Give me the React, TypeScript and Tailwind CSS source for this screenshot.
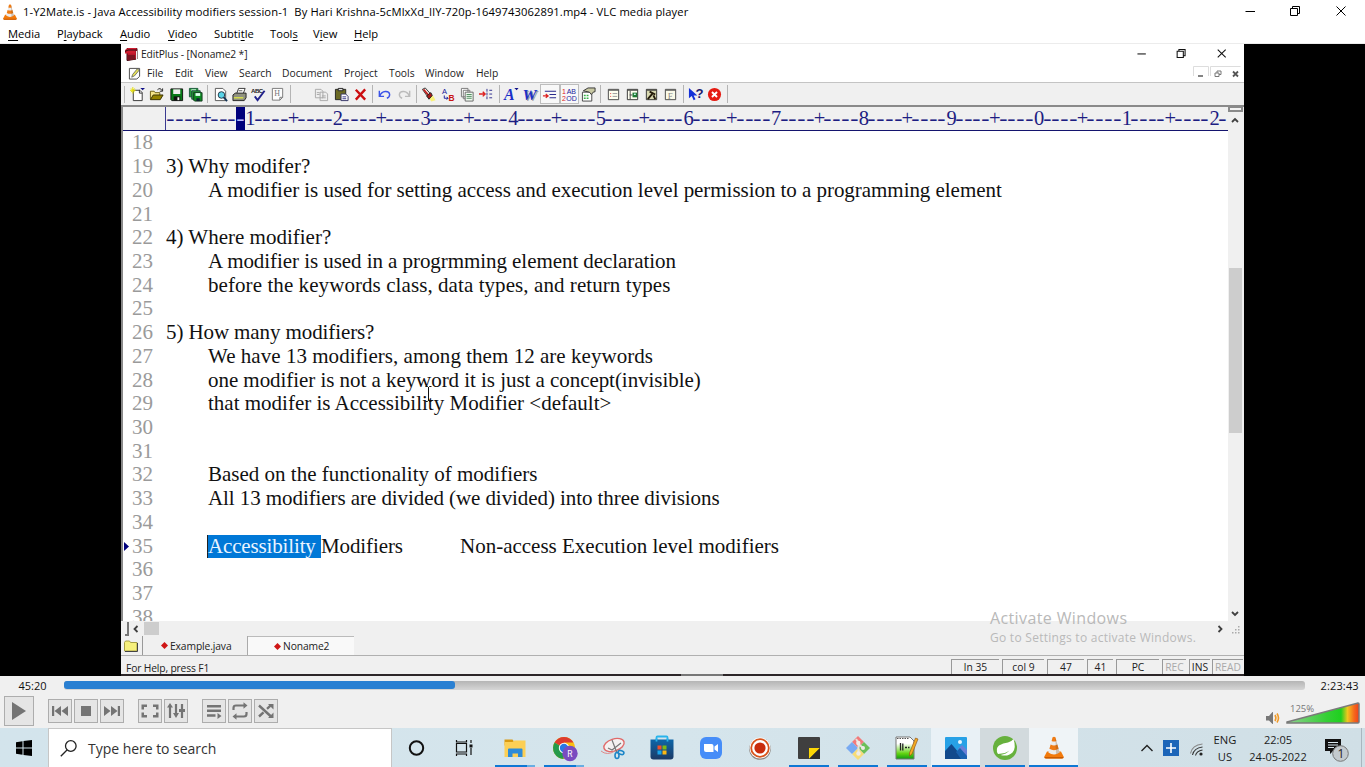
import React from "react";

const ui = "font-['Open_Sans','Noto_Sans',sans-serif]";

function Cone({ className }: { className: string }) {
  return (
    <svg viewBox="0 0 20 22" className={className}>
      <path d="M3 15 L17 15 L19.6 20 Q19.6 22 18 22 L2 22 Q0.4 22 0.4 20 Z" fill="#f27a0c" />
      <path d="M0.4 20.5 H19.6 V21 Q19.5 22 18 22 H2 Q0.5 22 0.4 21 Z" fill="#c95a00" />
      <path d="M8.6 0.8 Q10 -0.4 11.4 0.8 L15.6 16 Q10 20 4.4 16 Z" fill="#ececec" />
      <path d="M8.6 0.8 Q10 -0.4 11.4 0.8 L12.4 4.4 Q10 5.6 7.6 4.4 Z" fill="#ef7b14" />
      <path d="M6.6 8 Q10 9.8 13.4 8 L14.6 12.3 Q10 15 5.4 12.3 Z" fill="#ef7b14" />
      <path d="M11.4 0.8 L15.6 16 Q14 17.5 12 17.8 Z" fill="#7a4a20" opacity=".28" />
    </svg>
  );
}

const vlcMenu: [string, string, string, string][] = [
  ["", "M", "edia", "w-[49px]"],
  ["P", "l", "ayback", "w-[63px]"],
  ["", "A", "udio", "w-[48px]"],
  ["", "V", "ideo", "w-[46px]"],
  ["Subti", "t", "le", "w-[56px]"],
  ["Tool", "s", "", "w-[43px]"],
  ["V", "i", "ew", "w-[41px]"],
  ["", "H", "elp", "w-[40px]"],
];

const editMenu: [string, string][] = [
  ["File", "w-[28px]"],
  ["Edit", "w-[30px]"],
  ["View", "w-[34px]"],
  ["Search", "w-[43px]"],
  ["Document", "w-[62px]"],
  ["Project", "w-[45px]"],
  ["Tools", "w-[36px]"],
  ["Window", "w-[51px]"],
  ["Help", "w-[40px]"],
];

function WindowButtons({ big }: { big?: boolean }) {
  return (
    <svg viewBox="0 0 102 12" className={big ? "h-[12px] w-[102px]" : "h-[11px] w-[90px]"} fill="none" stroke={big ? "#000" : "#111"} strokeWidth={big ? 1 : 1.2}>
      <path d="M0.5 6.5h9.5" />
      <path d="M45.500 3.500h7v7h-7zM47.500 3.500v-2h7v7h-2" />
      <path d="M91.500 1.500l9 9M100.500 1.500l-9 9" />
    </svg>
  );
}

const glyphs: Record<string, React.ReactNode> = {
  blank: null,
  new: (
    <>
      <path d="M3.500 3.500h7l2.500 2.500v8.500H3.500z" fill="#fff" stroke="#333" />
      <path d="M10 3v3.500h3" fill="none" stroke="#333" />
      <path d="M3 0v7M0 3.500h6M1 1.500l4 4M5 1.500l-4 4" stroke="#e8e000" />
      <path d="M11 1h5l-2.500 2.500z" fill="#118" />
    </>
  ),
  open: (
    <>
      <path d="M1.500 13V4.500h4l1 1.500h5v3" fill="#f5e58a" stroke="#6a5c10" />
      <path d="M1.500 13.500l3-5h10.500l-3 5z" fill="#948300" stroke="#332d00" />
      <path d="M9 3q3-3 5 1M14.500 1.500v3h-3" fill="none" stroke="#222" />
    </>
  ),
  save: (
    <>
      <path d="M2 2h12.500v12.500H3L2 13.500z" fill="#087a18" stroke="#111" />
      <path d="M4.500 2.500h7.500v5H4.500z" fill="#eee" />
      <path d="M5 10h7v4.500H5z" fill="#111" />
      <path d="M9 11h2v3H9z" fill="#fff" />
    </>
  ),
  saveall: (
    <>
      <path d="M1.500 1.500h9v9h-9z" fill="#279a3a" stroke="#1d5a3c" />
      <path d="M3.500 2.500h5v2h-5z" fill="#dfe" />
      <path d="M4 4h9v9H4z" fill="#279a3a" stroke="#1d4a3c" />
      <path d="M6 6h9v9H7l-1-1z" fill="#0c8a20" stroke="#153a20" />
      <path d="M8 6.500h5v3H8z" fill="#dfe" />
      <path d="M9 12h3.500v3H9z" fill="#123" />
    </>
  ),
  preview: (
    <>
      <path d="M2.500 1.500h8l3 3v10h-11z" fill="#fff" stroke="#555" />
      <circle cx="9" cy="8.500" r="3.500" fill="#59d4e8" stroke="#234" />
      <path d="M11.500 11l3.500 4" stroke="#135" strokeWidth="2" />
    </>
  ),
  print: (
    <>
      <path d="M5 7l2-5.500h7L12 7z" fill="#fff" stroke="#333" />
      <path d="M1 8.500L3.500 6.500H15v5l-2 3H1z" fill="#8f9180" stroke="#222" />
      <path d="M2 11.500h10" stroke="#d9e34a" strokeWidth="1.500" />
      <path d="M7 4h4" stroke="#555" />
    </>
  ),
  spell: (
    <>
      <text x="0" y="6" fontSize="6.500" fontWeight="700" fill="#222" fontFamily="Liberation Sans" textLength="13">ABC</text>
      <path d="M4 10l3 4L14.500 4" fill="none" stroke="#22228c" strokeWidth="2" />
    </>
  ),
  hdoc: (
    <>
      <path d="M2.500 1.500h11v9.500l-3 3h-8z" fill="#fdfdfd" stroke="#777" />
      <path d="M10.500 14v-3h3" fill="none" stroke="#777" />
      <text x="4.500" y="10" fontSize="8.500" fill="#777" fontFamily="Liberation Serif">H</text>
    </>
  ),
  copygray: (
    <path d="M1.500 2.500h6l2 2v7h-8zM6.500 5.500h6l2 2v7h-8zM3 6h3M3 8h3M8.500 9.500h4M8.500 11.500h4" fill="#eee" stroke="#a9a9a9" />
  ),
  paste: (
    <>
      <path d="M1.500 2.500h11v11h-11z" fill="#6b6a24" stroke="#222" />
      <path d="M4.500 1.500h5v2.500h-5z" fill="#ddd" stroke="#222" />
      <path d="M7.500 7.500h5l2.500 2.500v4.500H7.500z" fill="#fff" stroke="#336" />
      <path d="M9 10.500h4M9 12.500h4" stroke="#338" />
    </>
  ),
  del: <path d="M3 3l10 10.500M13 2.500L3 13.500" stroke="#cc0d10" strokeWidth="2.500" />,
  undo: <path d="M2.500 4v6h5M3 9.500C5 3.500 13 3.500 13.500 8q0 3-3 4" fill="none" stroke="#3b53e8" strokeWidth="1.500" />,
  redo: <path d="M13.500 4v6h-5M13 9.500C11 3.500 3 3.500 2.500 8q0 3 3 4" fill="none" stroke="#bbb" strokeWidth="1.500" />,
  find: (
    <>
      <path d="M11 9l2.500 1 2 4-4.500 1.500-2-3z" fill="#f9f27a" />
      <path d="M1.500 2.500L4.500 1l5 5.500-3 3z" fill="#f3e4e0" stroke="#333" />
      <path d="M2 3l1.500-1 5 6-1.500 1z" fill="#c01c1c" />
      <path d="M6 9.500L10.500 6l1.500 3-3.500 4z" fill="#a81818" stroke="#222" />
    </>
  ),
  replace: (
    <>
      <text x="1" y="7.500" fontSize="8" fill="#15159a" fontFamily="Liberation Sans">A</text>
      <text x="8" y="14.500" fontSize="9" fill="#c81414" fontFamily="Liberation Sans" fontWeight="700">B</text>
      <path d="M3.500 9v3h4M6 10.500l1.500 1.500L6 13.500" fill="none" stroke="#15159a" />
    </>
  ),
  copies: (
    <>
      <path d="M1.500 1.500h7v9h-7zM3.500 3.500h7v9h-7z" fill="#fff" stroke="#777" />
      <path d="M5.500 5.500h8.500v9.500H5.500z" fill="#eef8ee" stroke="#666" />
      <path d="M7 8h5.500M7 10h5.500M7 12h5.500" stroke="#4a8a5a" />
    </>
  ),
  goto: (
    <>
      <path d="M0 7.500h6M4 5l2.500 2.500L4 10" fill="none" stroke="#d22" strokeWidth="1.500" />
      <path d="M8.500 2v12M11 3.500h4M11 7.500h4M11 11.500h4" stroke="#2a2a8c" strokeDasharray="3 1" />
    </>
  ),
  fontA: (
    <>
      <text x="0" y="14" fontSize="17" fontStyle="italic" fontWeight="700" fill="#1b30c8" fontFamily="Liberation Serif">A</text>
      <path d="M11 1h4.500l-2 2.500z" fill="#118" />
    </>
  ),
  fontW: (
    <>
      <text x="0.800" y="14.800" fontSize="16" fontStyle="italic" fontWeight="700" fill="#9a9aa8" fontFamily="Liberation Serif" textLength="15" lengthAdjust="spacingAndGlyphs">W</text>
      <text x="-0.500" y="13.800" fontSize="16" fontStyle="italic" fontWeight="700" fill="#1b30c8" fontFamily="Liberation Serif" textLength="15" lengthAdjust="spacingAndGlyphs">W</text>
    </>
  ),
  indent: (
    <>
      <path d="M1 9.500h5M4 7.500l2.500 2L4 11.500" fill="none" stroke="#d22" strokeWidth="1.300" />
      <path d="M3 4.500h12M8 8h7M8 11.500h7" stroke="#2a2a8c" strokeWidth="1.200" />
    </>
  ),
  nums: (
    <>
      <text x="0" y="7.500" fontSize="7.500" fill="#d22" fontFamily="Liberation Sans">1</text>
      <text x="0" y="15" fontSize="7.500" fill="#d22" fontFamily="Liberation Sans">2</text>
      <text x="5" y="7.500" fontSize="7.500" fill="#22229c" fontFamily="Liberation Sans">AB</text>
      <text x="4.500" y="15" fontSize="7.500" fill="#22229c" fontFamily="Liberation Sans">OD</text>
    </>
  ),
  props: (
    <>
      <path d="M1.500 5.500h10v9.500h-10z" fill="#fff" stroke="#444" />
      <path d="M3 9h6M3 12h6" stroke="#39b34a" strokeWidth="1.500" strokeDasharray="2 1" />
      <path d="M2.500 4l5-3h7.500v4l-2 .5L11 8 9 5.500z" fill="#c9c9a4" stroke="#333" />
    </>
  ),
  win1: (
    <>
      <path d="M2.500 2.500h11v11h-11z" fill="#fffff0" stroke="#444" />
      <path d="M2.500 3.500h11" stroke="#555" />
      <path d="M4.500 7h1M4.500 10h1" stroke="#d33" />
      <path d="M7 7h5M7 10h5" stroke="#999" />
    </>
  ),
  win2: (
    <>
      <path d="M2.500 2.500h11v11h-11z" fill="#fffff0" stroke="#333" />
      <path d="M2.500 3.500h11M5.500 4v9M5 8.500h3" stroke="#444" />
      <path d="M8 6h5v5H8z" fill="#1f7a34" />
      <path d="M9.500 7h2v1.500h-2z" fill="#cfe" />
    </>
  ),
  win3: (
    <>
      <path d="M2.500 2.500h11v11h-11z" fill="#d8d8b0" stroke="#333" />
      <path d="M2.500 3.500h11" stroke="#444" />
      <path d="M4 13l5-6M6 5l6 3M10 9l2 4" stroke="#231a0a" strokeWidth="2" />
    </>
  ),
  win4: (
    <>
      <path d="M2.500 2.500h11v11h-11z" fill="#fafae8" stroke="#444" />
      <path d="M2.500 3.500h11" stroke="#555" />
      <text x="5" y="12.500" fontSize="9.500" fill="#888" fontFamily="Liberation Serif">F</text>
    </>
  ),
  help: (
    <>
      <path d="M1 1v11l3-2.500 2 4.500 2-1-2-4h4z" fill="#1430d8" />
      <text x="8" y="12" fontSize="14" fontWeight="700" fill="#1b1b70" fontFamily="Liberation Sans">?</text>
    </>
  ),
  stop: (
    <>
      <circle cx="8" cy="8" r="7" fill="#e51b12" />
      <path d="M5.300 5.300l5.400 5.400M10.700 5.300l-5.400 5.400" stroke="#fff" strokeWidth="2" />
    </>
  ),
};

const toolGroups = [
  ["new", "open", "save", "saveall"],
  ["preview", "print", "spell", "hdoc"],
  ["blank", "copygray", "paste", "del"],
  ["undo", "redo"],
  ["find", "replace", "copies", "goto"],
  ["fontA", "fontW", "indent", "nums", "props"],
  ["win1", "win2", "win3", "win4"],
  ["help", "stop"],
];

function Toolbar() {
  return (
    <div className="flex h-[23px] items-center border-t border-[#c4c4c4] bg-[#f0f0f0] pl-[3px]">
      <div className="mr-[3px] h-[17px] w-px bg-[#b8b8b8]" />
      {toolGroups.map((g, i) => (
        <React.Fragment key={i}>
          {g.map((n) => (
            <div key={n} className={n === "indent" || n === "nums" ? "flex h-[20px] w-[19.28px] items-center justify-center border border-[#bdbdbd] bg-[#f8f8f8]" : "flex h-[20px] w-[19.28px] items-center justify-center"}>
              <svg viewBox="0 0 16 16" className="h-[15px] w-[15px] shrink-0 overflow-visible">{glyphs[n]}</svg>
            </div>
          ))}
          <div className="flex w-[5.4px] justify-center">
            <div className="h-[18px] w-px bg-[#b4b4b4]" />
          </div>
        </React.Fragment>
      ))}
    </div>
  );
}

const rulerChars = Array.from({ length: 121 }, (_, i) => (i % 10 === 9 ? String(((i + 1) / 10) % 10) : i % 10 === 4 ? "+" : "-"));

type Line = { n: number; t?: string; cls?: string };
const lines: Line[] = [
  { n: 18 },
  { n: 19, t: "3) Why modifer?", cls: "" },
  { n: 20, t: "A modifier is used for setting access and execution level permission to a programming element", cls: "pl-[42px] tracking-[-0.044px]" },
  { n: 21 },
  { n: 22, t: "4) Where modifier?", cls: "" },
  { n: 23, t: "A modifier is used in a progrmming element declaration", cls: "pl-[42px] tracking-[-0.06px]" },
  { n: 24, t: "before the keywords class, data types, and return types", cls: "pl-[42px] tracking-[0.075px]" },
  { n: 25 },
  { n: 26, t: "5) How many modifiers?", cls: "tracking-[-0.1px]" },
  { n: 27, t: "We have 13 modifiers, among them 12 are keywords", cls: "pl-[42px] tracking-[0.035px]" },
  { n: 28, t: "one modifier is not a keyword it is just a concept(invisible)", cls: "pl-[42px] tracking-[-0.05px]" },
  { n: 29, t: "that modifer is Accessibility Modifier <default>", cls: "pl-[42px]" },
  { n: 30 },
  { n: 31 },
  { n: 32, t: "Based on the functionality of modifiers", cls: "pl-[42px]" },
  { n: 33, t: "All 13 modifiers are divided (we divided) into three divisions", cls: "pl-[42px] tracking-[-0.075px]" },
  { n: 34 },
  { n: 35 },
  { n: 36 },
  { n: 37 },
  { n: 38 },
];

function Editor() {
  return (
    <div className="relative h-[490px] overflow-hidden bg-white pt-[0.4px] font-['Liberation_Serif',serif] text-[21px] leading-[23.72px] text-[#111]">
      {lines.map((l) => (
        <div key={l.n} className="flex h-[23.72px] whitespace-pre">
          <span className="flex w-[9px] items-center justify-start pl-px">
            {l.n === 35 && (
              <svg viewBox="0 0 5 9" className="h-[9px] w-[5px]">
                <path d="M0 0l5 4.500L0 9z" fill="#00007c" />
              </svg>
            )}
          </span>
          <span className="w-[34px] text-[#9a9a9a]">{l.n}</span>
          {l.n === 35 ? (
            <>
              <span className="ml-[41px] w-[114px] border-l border-[#222] bg-[#0078d7] tracking-[-0.15px] text-[#eaf4ff]">Accessibility </span>
              <span className="w-[139px] tracking-[-0.1px]">Modifiers</span>
              <span>Non-access Execution level modifiers</span>
            </>
          ) : (
            <span className={l.cls}>{l.t}</span>
          )}
        </div>
      ))}
      <svg viewBox="0 0 7 16" className="absolute left-[302px] top-[255px] h-[16px] w-[7px]" fill="none" stroke="#111">
        <path d="M0.500 0.500h2l1 1 1-1h2M3.500 1v14M0.500 15.500h2l1-1 1 1h2" />
      </svg>
    </div>
  );
}

function Chevron({ d, className }: { d: string; className: string }) {
  return (
    <svg viewBox="0 0 8 8" className={className} fill="none" stroke="#404040" strokeWidth="1.800">
      <path d={d} />
    </svg>
  );
}

function EditPlus() {
  return (
    <div className={`relative flex h-[632px] w-[1123px] flex-col bg-[#f0f0f0] text-[#222] ${ui}`}>
      <div className="flex h-[20px] items-center bg-white pl-[3px]">
        <svg viewBox="0 0 14 14" className="h-[14px] w-[14px]">
          <path d="M3 1.500h10v10.500L3 13.500z" fill="#b9152a" stroke="#3a0b12" />
          <path d="M1 3l3-2h9l-2 2.500v3H1z" fill="#cf1c30" />
          <path d="M1 4.500l3-1.500h8" fill="none" stroke="#2b0a10" />
          <path d="M4 8h7v4.500l-7 1z" fill="#7b1220" />
          <path d="M12.500 4v9" stroke="#eee" />
        </svg>
        <span className="ml-[3px] flex-1 text-[10.300px] leading-[20px] tracking-[-0.13px]">EditPlus - [Noname2 *]</span>
        <div className="mb-[2px] mr-[17px] flex"><WindowButtons /></div>
      </div>
      <div className="flex h-[18px] items-center bg-white pl-[7px] text-[10.300px]">
        <svg viewBox="0 0 14 14" className="mr-[6px] h-[13px] w-[13px]">
          <path d="M1.500 1.500h11v8.500l-3 3h-8z" fill="#fff" stroke="#444" />
          <path d="M4 11l1-3 5-6 2 1.500-5 6z" fill="#e6e25a" stroke="#555" strokeWidth=".8" />
        </svg>
        {editMenu.map(([t, w]) => (
          <span key={t} className={`${w} whitespace-nowrap leading-[17px]`}>{t}</span>
        ))}
        <div className="mb-[4px] ml-auto mr-[3px] flex h-[13px]">
          <svg viewBox="0 0 48 13" className="h-[13px] w-[48px]" fill="none" stroke="#777">
            <path d="M0.500 11V1.500h15V11M17.500 11V1.500h30" stroke="#ddd" />
            <path d="M5 11h5" strokeWidth="1.800" />
            <path d="M22 8h4v3.500h-4zM24 8V6h4v3.500h-2" />
            <path d="M40 6.500l5 5M45 6.500l-5 5" strokeWidth="1.800" stroke="#555" />
          </svg>
        </div>
      </div>
      <Toolbar />
      <div className="flex h-[516px] border-l-2 border-t-2 border-[#8a8a8a]">
        <div className="flex w-[1105px] flex-col">
          <div className="flex h-[24px] border-b border-[#14146e] bg-[#f0f0f0] pl-[42px] font-['Liberation_Serif',serif] text-[20.500px] leading-[22px] text-[#1d1d82]">
            <div className="flex border-l border-[#3a3a90]">
              {rulerChars.map((c, i) => (
                <span key={i} className={i === 8 ? "flex w-[8.780px] justify-center bg-[#00007c] text-[#b8b8ff]" : "flex w-[8.780px] justify-center"}>
                  <span className={c === "-" ? "inline-block scale-x-120" : c === "+" ? "pl-px" : "relative left-px"}>{c}</span>
                </span>
              ))}
            </div>
          </div>
          <Editor />
        </div>
        <div className="flex w-[14px] flex-col items-center bg-[#f0f0f0]">
          <div className="mt-[-1px] h-[6px] w-[15px] border-2 border-[#8a8a8a] bg-[#f4f4f4]" />
          <Chevron d="M1 6l3-3 3 3" className="mt-[4px] h-[8px] w-[8px]" />
          <div className="mt-[144px] h-[165px] w-[13px] bg-[#cdcdcd]" />
          <Chevron d="M1 2l3 3 3-3" className="mt-[177px] h-[8px] w-[8px]" />
        </div>
      </div>
      <div className="flex h-[15px] items-center bg-[#f0f0f0] pl-[4px]">
        <div className="h-[14px] w-[4px] border-b-2 border-r-2 border-[#777]" />
        <Chevron d="M5.500 1l-3 3 3 3" className="ml-[3px] h-[8px] w-[8px]" />
        <div className="ml-[4px] h-[13px] w-[15px] bg-[#cdcdcd]" />
        <Chevron d="M2.500 1l3 3-3 3" className="ml-auto mr-[7px] h-[8px] w-[8px]" />
        <svg viewBox="0 0 10 10" className="mr-[3px] mt-[3px] h-[10px] w-[10px]" fill="#aaa">
          <path d="M7 1h1.500v1.500H7zM7 4h1.500v1.500H7zM4 4h1.500v1.500H4zM7 7h1.500v1.500H7zM4 7h1.500v1.500H4zM1 7h1.500v1.500H1z" />
        </svg>
      </div>
      <div className="flex h-[20px] border-b border-[#b0b0b0] text-[10.300px] leading-[21px] tracking-[-0.12px]">
        <div className="flex w-[22px] items-center justify-center border-r border-[#999] pr-px">
          <svg viewBox="0 0 14 12" className="h-[12px] w-[14px]">
            <path d="M0.500 2.500l1-1.500h4l1 1.500h6.500v8.500H0.500z" fill="#f6f07c" stroke="#a8a044" />
            <path d="M1 11.500h12.500V3" fill="none" stroke="#444" />
          </svg>
        </div>
        <div className="flex w-[105px] items-center border-r border-[#aaa] pl-[18px]">
          <svg viewBox="0 0 8 8" className="mr-[2px] h-[7px] w-[7px]"><path d="M4 0l4 4-4 4-4-4z" fill="#cf1616" /></svg>
          <span className="mt-px">Example.java</span>
        </div>
        <div className="flex w-[106px] items-center border-t border-[#bbb] bg-[#f9f9f9] pl-[26px]">
          <svg viewBox="0 0 8 8" className="mr-[2px] h-[7px] w-[7px]"><path d="M4 0l4 4-4 4-4-4z" fill="#cf1616" /></svg>
          <span className="mt-px">Noname2</span>
        </div>
      </div>
      <div className="flex h-[18px] items-end pl-[5px] pr-px text-[10.300px] leading-[14px]">
        <span className="mb-[-1px] flex-1 tracking-[-0.16px]">For Help, press F1</span>
        <span className="flex h-[15px] w-[48px] items-center justify-center border-l border-t border-[#999]">ln 35</span>
        <span className="ml-[3px] flex h-[15px] w-[42px] items-center justify-center border-l border-t border-[#999]">col 9</span>
        <span className="ml-[3px] flex h-[15px] w-[37px] items-center justify-center border-l border-t border-[#999]">47</span>
        <span className="ml-[3px] flex h-[15px] w-[26px] items-center justify-center border-l border-t border-[#999]">41</span>
        <span className="ml-[3px] flex h-[15px] w-[43px] items-center justify-center border-l border-t border-[#999]">PC</span>
        <span className="ml-[3px] flex h-[15px] w-[24px] items-center justify-center border-l border-t border-[#999] text-[#aaa]">REC</span>
        <span className="ml-[3px] flex h-[15px] w-[21px] items-center justify-center border-l border-t border-[#999]">INS</span>
        <span className="ml-[2px] flex h-[15px] w-[31px] items-center justify-center border-l border-t border-[#999] text-[#aaa]">READ</span>
      </div>
      <div className="flex h-[2px] bg-[#2c2628]">
        <div className="ml-[560px] h-[2px] w-[42px] bg-[#777]" />
      </div>
      <div className="absolute left-[869px] top-[564px] text-[#b9b9b9]">
        <div className="whitespace-nowrap text-[16px] leading-[21px] tracking-[0.38px]">Activate Windows</div>
        <div className="whitespace-nowrap text-[12px] leading-[18px] tracking-[0.27px]">Go to Settings to activate Windows.</div>
      </div>
    </div>
  );
}

function Btn({ children }: { children: React.ReactNode }) {
  return (
    <div className="flex h-[24px] w-[24px] items-center justify-center border border-[#adadad] bg-[#e5e5e5]">
      <svg viewBox="0 0 20 20" className="h-[20px] w-[20px]" fill="#747474">{children}</svg>
    </div>
  );
}

function Controls() {
  return (
    <div className={`flex h-[52px] flex-col bg-[#f0f0f0] ${ui}`}>
      <div className="flex h-[19px] items-center text-[11px] leading-[19px] text-[#111]">
        <span className="w-[64px] pl-[18.500px]">45:20</span>
        <div className="h-[9px] w-[1241px] rounded-[3px] bg-linear-to-b from-[#b5b5b5] to-[#d6d6d6]">
          <div className="h-[8px] w-[391px] rounded-[3px] bg-[#2a80d2]" />
        </div>
        <span className="ml-[15.500px] tracking-[0.15px]">2:23:43</span>
      </div>
      <div className="flex h-[33px] pl-[4px]">
        <div className="mt-[1px] flex h-[30px] w-[30px] items-center justify-center border border-[#adadad] bg-[#e5e5e5]">
          <svg viewBox="0 0 14 18" className="h-[18px] w-[14px]"><path d="M0 0l14 9L0 18z" fill="#747474" /></svg>
        </div>
        <div className="ml-[14px] mt-[4px] flex gap-[2px]">
          <Btn><path d="M2 5h2.200v10H2zM11 5v10l-6.500-5zM18 5v10l-6.500-5z" /></Btn>
          <Btn><path d="M5 5h10v10H5z" /></Btn>
          <Btn><path d="M18 5h-2.200v10H18zM9 5v10l6.500-5zM2 5v10l6.500-5z" /></Btn>
        </div>
        <div className="ml-[14px] mt-[4px] flex gap-[2px]">
          <Btn><path d="M1.500 3.500h5.500v2.500H4v2.500H1.500zM18.500 3.500H13v2.500h3v2.500h2.500zM1.500 16.500h5.500V14H4v-2.500H1.500zM18.500 16.500H13V14h3v-2.500h2.500z" /></Btn>
          <Btn>
            <path d="M2.900 6h2.200v11H2.900zM4 2l3 4.500H1zM8.900 3h2.200v10H8.900zM7 12h6l-3 5zM14.900 3h2.200v14h-2.200zM13 8h6v3h-6z" />
          </Btn>
        </div>
        <div className="ml-[14px] mt-[4px] flex gap-[2px]">
          <Btn><path d="M3 4h14v2.400H3zM3 8.600h14V11H3zM3 13.300h8.500v2.400H3zM13.500 12l4 3-4 3z" /></Btn>
          <Btn>
            <path d="M3.500 9V7q0-2.500 2.500-2.500h8M16.500 11v2q0 2.500-2.500 2.500H6" fill="none" stroke="#747474" strokeWidth="2.200" />
            <path d="M13.500 1.200l4 3.300-4 3.300zM6.500 12.200l-4 3.300 4 3.300z" />
          </Btn>
          <Btn>
            <path d="M3 4.500L15 15.500M3 15.500l4.500-4.200M11 7.800l4-3.600" fill="none" stroke="#747474" strokeWidth="2.400" />
            <path d="M12 3h5.500v5.500zM12 17h5.500v-5.500z" />
          </Btn>
        </div>
        <svg viewBox="0 0 96 28" className="ml-auto mr-[4px] mt-[4px] h-[28px] w-[96px]">
          <defs>
            <linearGradient id="vol" x1="0" x2="1">
              <stop offset="0" stopColor="#8fd08f" />
              <stop offset=".55" stopColor="#35cf35" />
              <stop offset=".75" stopColor="#1fd01f" />
              <stop offset=".84" stopColor="#f0c61e" />
              <stop offset=".93" stopColor="#f56a1c" />
              <stop offset="1" stopColor="#ee3f1c" />
            </linearGradient>
          </defs>
          <path d="M1 17h3l3.500-4h.5v12h-.5L4 21.500H1z" fill="#777" />
          <path d="M10 16q1.800 3 0 6M12 14.500q3 4.500 0 9" fill="none" stroke="#f09a28" strokeWidth="1.600" />
          <path d="M22 23L93 4q1 0 1 1v18q0 1-1 1H22z" fill="url(#vol)" stroke="#7a7a7a" strokeWidth="1.500" />
          <text x="25" y="12.500" fontSize="9.500" fill="#777" fontFamily="Open Sans" textLength="24">125%</text>
        </svg>
      </div>
    </div>
  );
}

const apps: { id: string; cell: string; bar: string; light?: boolean; art: React.ReactNode }[] = [
  { id: "cortana", cell: "", bar: "", art: <circle cx="11.500" cy="12" r="6.700" fill="none" stroke="#111" strokeWidth="2" /> },
  {
    id: "taskview", cell: "", bar: "",
    art: (
      <g fill="none" stroke="#111" strokeWidth="1.200">
        <path d="M2.500 7.500h10v8.500h-10zM2.500 4v2h10V4M2.500 20v-2h10v2M17 4v3M17 12v7" />
        <path d="M15.500 8.500h3v3h-3z" fill="#111" stroke="none" />
      </g>
    ),
  },
  {
    id: "explorer", cell: "", bar: "w-[40px]", light: true,
    art: (
      <>
        <path d="M1.500 3.500h8l1.500 2v4h-9.500z" fill="#d99a12" />
        <path d="M1.500 6h8l2-1.500h11V21h-21z" fill="#fccf55" />
        <path d="M5 13.500q0-1 1-1h12.500q1 0 1 1V21H15v-3.500H9.500V21H5z" fill="#2d8bd8" />
      </>
    ),
  },
  {
    id: "chrome", cell: "", bar: "w-[40px]", light: true,
    art: (
      <>
        <circle cx="12" cy="12" r="11" fill="#fbbf12" />
        <path d="M12 12L2.500 6.500A11 11 0 0 1 21.500 6.500H12z" fill="#dd3b2e" />
        <path d="M12 12L2.500 6.500A11 11 0 0 0 11.500 23z" fill="#249a4b" />
        <circle cx="12" cy="12" r="5.200" fill="#fff" />
        <circle cx="12" cy="12" r="4.200" fill="#2a78e4" />
        <circle cx="18" cy="17.500" r="7.700" fill="#7a4cc0" />
        <text x="15.200" y="20.800" fontSize="8.500" fill="#fff" fontFamily="Roboto">R</text>
      </>
    ),
  },
  {
    id: "snip", cell: "", bar: "",
    art: (
      <g fill="none">
        <ellipse cx="13" cy="9" rx="10.500" ry="6" transform="rotate(-18 13 9)" fill="#f4f1f1" stroke="#e06a6a" strokeWidth="1.400" />
        <path d="M0 15q6 5 14 0" stroke="#e08a8a" />
        <path d="M11 4l5 13M20 7l-9 7-4-2" stroke="#777" strokeWidth="1.200" />
        <ellipse cx="16" cy="19.500" rx="2" ry="3" stroke="#1d86c8" strokeWidth="1.600" />
        <ellipse cx="20" cy="16.500" rx="3" ry="1.900" transform="rotate(20 20 16.500)" stroke="#1d86c8" strokeWidth="1.600" />
      </g>
    ),
  },
  {
    id: "store", cell: "", bar: "",
    art: (
      <>
        <defs><linearGradient id="st" x1="0" y1="0" x2="0" y2="1"><stop offset="0" stopColor="#0d66a8" /><stop offset="1" stopColor="#1c3a66" /></linearGradient></defs>
        <path d="M6.500 4.500V1.500q0-1 1-1h9q1 0 1 1v3" fill="none" stroke="#28b4ec" strokeWidth="1.800" />
        <path d="M0.500 3.500h23V20.500q0 3-3 3H3.500q-3 0-3-3z" fill="url(#st)" />
        <path d="M6.500 5.500V2.500M17.500 5.500V2.500" stroke="#28b4ec" strokeWidth="1.800" />
        <path d="M7.500 9.500h4v4h-4z" fill="#f0502a" /><path d="M12.500 9.500h4v4h-4z" fill="#7cba12" />
        <path d="M7.500 14.500h4v4h-4z" fill="#18a4ea" /><path d="M12.500 14.500h4v4h-4z" fill="#fcb813" />
      </>
    ),
  },
  {
    id: "zoom", cell: "", bar: "",
    art: (
      <>
        <rect x="1" y="1" width="22" height="22" rx="6" fill="#468df8" />
        <path d="M5 8h7.500q2 0 2 2v6H7q-2 0-2-2zM15.500 10.500L19 8v8l-3.500-2.500z" fill="#fff" />
      </>
    ),
  },
  {
    id: "record", cell: "", bar: "",
    art: (
      <>
        <circle cx="12" cy="13" r="10.800" fill="#8d8580" />
        <circle cx="12" cy="12" r="10.500" fill="#fff" />
        <circle cx="12" cy="12" r="8.800" fill="#fff" stroke="#d8541c" strokeWidth="1.800" />
        <circle cx="12" cy="12" r="5.600" fill="#c92c0c" />
      </>
    ),
  },
  {
    id: "sticky", cell: "", bar: "w-[40px]",
    art: (
      <>
        <rect x="1" y="1" width="22" height="22" rx="1" fill="#3f3f3f" />
        <path d="M12 12h11L12 23z" fill="#fcd705" /><path d="M23 12v11H12z" fill="#2d2d2d" />
      </>
    ),
  },
  {
    id: "git", cell: "", bar: "w-[40px]",
    art: (
      <>
        <path d="M12 0l6 6-6 6-6-6z" fill="#f27a7a" /><path d="M18 6l6 6-6 6-6-6z" fill="#6cbf58" />
        <path d="M12 12l6 6-6 6-6-6z" fill="#f7dc78" /><path d="M6 6l6 6-6 6-6-6z" fill="#78aaf2" />
        <path d="M10 3l2.500 3.500v11M12.500 8l4.500 4" fill="none" stroke="#e6e2dc" strokeWidth="2" />
        <circle cx="12.500" cy="17.500" r="2.200" fill="#efebe6" /><circle cx="17" cy="12" r="2" fill="#efebe6" /><circle cx="12.300" cy="7" r="2.200" fill="#efebe6" />
      </>
    ),
  },
  {
    id: "notepad", cell: "", bar: "w-[40px]",
    art: (
      <>
        <defs><linearGradient id="np" x1="0" y1="0" x2="0" y2="1"><stop offset=".3" stopColor="#fff" /><stop offset=".75" stopColor="#62d312" /><stop offset="1" stopColor="#0d9a10" /></linearGradient></defs>
        <path d="M1 1h14l4 4v18H1z" fill="url(#np)" stroke="#777" />
        <path d="M2 2.500h12" stroke="#555" strokeDasharray="1.500 1" />
        <path d="M5.500 7v7.500M7.800 7.500v7M10 11.500h2M13 11.500h1.500" stroke="#222" strokeWidth="1.300" />
        <path d="M14.500 17l6-15 2.500 1-6 15-2.500 2z" fill="#f2aa22" stroke="#8a4a12" strokeWidth=".6" />
      </>
    ),
  },
  {
    id: "photos", cell: "bg-[#e9f1f6]", bar: "w-[48px]",
    art: (
      <>
        <rect x="1" y="1" width="22" height="22" rx="1" fill="#27a1e6" />
        <path d="M14 13l4-4 5 5v8h-9z" fill="#6a80d8" />
        <path d="M1 15l6.500-7L20 23H1z" fill="#12498c" /><path d="M12 16l4-4 7 8v3H17z" fill="#1a62b0" />
        <circle cx="16" cy="6" r="2" fill="#e8f6ff" />
      </>
    ),
  },
  {
    id: "spring", cell: "bg-[#d2dadd]", bar: "w-[40px]",
    art: (
      <>
        <circle cx="12" cy="12" r="12" fill="#67b13d" />
        <path d="M20.500 3q3 9-1 13.500-4.500 4.500-12 2.500 6-1 9-4.500-3.500 3-11.500 3.500-3-5 1-8.500 4-2.500 9-3 3.500-.8 5.500-3.500z" fill="#fff" />
      </>
    ),
  },
];

function Taskbar() {
  return (
    <div className={`flex h-[39px] bg-linear-to-r from-[#d3e4ec] via-[#d5e5ec] to-[#d0dfe6] ${ui}`}>
      <div className="flex w-[48px] items-center justify-center">
        <svg viewBox="0 0 16 16" className="h-[16px] w-[16px]"><path d="M0 2.200L6.500 1.300V7.500H0zM7.500 1.100L16 0v7.500H7.500zM0 8.500h6.500v6.200L0 13.800zM7.500 8.500H16V16l-8.500-1.100z" fill="#000" /></svg>
      </div>
      <div className="flex w-[344px] items-center border border-b-0 border-[#c6c6c6] bg-white pl-[11px]">
        <svg viewBox="0 0 17 17" className="h-[17px] w-[17px]" fill="none" stroke="#222" strokeWidth="1.300"><circle cx="10.800" cy="6" r="5.300" /><path d="M7 10L0.800 16.200" /></svg>
        <span className="ml-[11px] text-[14px] tracking-[-0.03px] text-[#333]">Type here to search</span>
      </div>
      {apps.map((a) => (
        <div key={a.id} className={`relative flex w-[49px] items-center justify-center ${a.cell}`}>
          <svg viewBox="0 0 24 24" className="h-[24px] w-[24px] overflow-visible">{a.art}</svg>
          {a.bar && (
            <div className={`absolute bottom-0 flex h-[2px] justify-end bg-[#0f78d4] ${a.bar}`}>
              {a.light && <div className="h-[2px] w-[8px] bg-[#69aee2]" />}
            </div>
          )}
        </div>
      ))}
      <div className="relative flex w-[49px] items-center justify-center bg-[#eff4f7]">
        <Cone className="h-[23px] w-[20px]" />
        <div className="absolute bottom-0 h-[2px] w-[49px] bg-[#0f78d4]" />
      </div>
      <div className="flex flex-1 items-center pl-[63px] text-[#1c1c1c]">
        <svg viewBox="0 0 12 8" className="h-[8px] w-[12px]" fill="none" stroke="#222" strokeWidth="1.400"><path d="M0.500 7L6 1.500 11.500 7" /></svg>
        <svg viewBox="0 0 16 16" className="ml-[10px] h-[16px] w-[16px]"><path d="M0 0h16v16H0z" fill="#1c65b8" /><path d="M8 3v10M3 8h10" stroke="#fff" strokeWidth="1.600" /></svg>
        <svg viewBox="0 0 13 13" className="ml-[11px] mt-[3px] h-[13px] w-[13px]" fill="none" stroke="#333" strokeWidth="1.100">
          <path d="M0.500 10.500Q2 2 12.500 1" stroke="#888" /><path d="M2.500 12Q4 5 12.500 4M5.500 12.500Q6.500 8 12.500 7" /><circle cx="11" cy="11" r="1.600" fill="#222" stroke="none" />
        </svg>
        <div className="ml-[8px] w-[28px] text-center text-[11.200px] leading-[17px]"><div>ENG</div><div>US</div></div>
        <div className="ml-[6px] w-[66px] whitespace-nowrap text-center text-[11px] leading-[17px]"><div>22:05</div><div>24-05-2022</div></div>
        <svg viewBox="0 0 26 26" className="ml-[14px] mt-[5px] h-[26px] w-[26px]">
          <path d="M0 2h16v12H8l-3 3v-3H0z" fill="#111" />
          <path d="M3 5.500h10M3 8h10M3 10.500h6" stroke="#d8e6ee" />
          <circle cx="15.500" cy="16.500" r="7.800" fill="#c3cace" stroke="#777" />
          <text x="12.500" y="20.800" fontSize="12" fill="#222" fontFamily="Open Sans">1</text>
        </svg>
        <div className="ml-auto mr-[3px] h-[39px] w-px bg-[#a9b7bf]" />
      </div>
    </div>
  );
}

export default function App() {
  return (
    <div className="flex h-[767px] w-[1365px] flex-col overflow-hidden bg-white">
      <div className={`flex h-[24px] items-center pl-[3px] text-black ${ui}`}>
        <Cone className="h-[16px] w-[14px]" />
        <span className="ml-[6px] flex-1 whitespace-pre text-[11.200px] tracking-[0.1px]">1-Y2Mate.is - Java Accessibility modifiers session-1  By Hari Krishna-5cMlxXd_IlY-720p-1649743062891.mp4 - VLC media player</span>
        <div className="mb-[2px] mr-[18px] flex"><WindowButtons big /></div>
      </div>
      <div className={`flex h-[20px] border-b border-[#ececec] pl-[8px] text-[11.200px] leading-[20px] text-black ${ui}`}>
        {vlcMenu.map(([a, b, c, w]) => (
          <span key={a + b + c} className={w}>{a}<span className="underline underline-offset-2">{b}</span>{c}</span>
        ))}
      </div>
      <div className="flex h-[632px] bg-black pl-[121px]">
        <EditPlus />
      </div>
      <Controls />
      <Taskbar />
    </div>
  );
}
